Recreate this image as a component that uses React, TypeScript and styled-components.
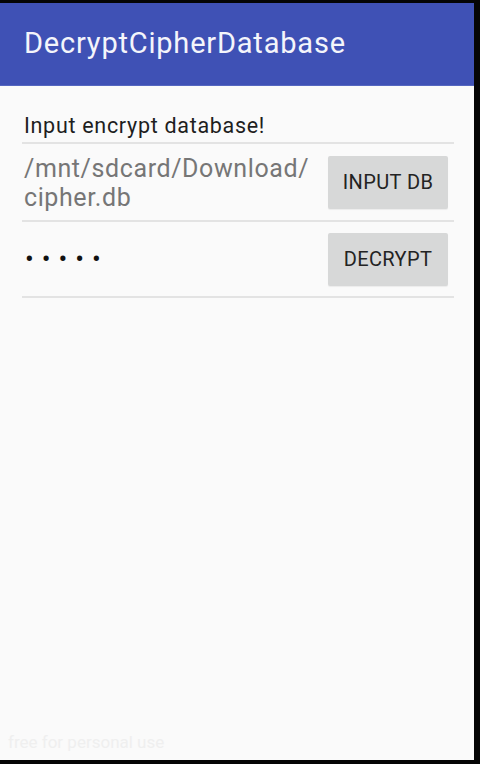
import React from 'react'
import styled, { createGlobalStyle } from 'styled-components'

const GlobalStyle = createGlobalStyle`
  html, body {
    margin: 0;
    padding: 0;
    background: #050505;
    font-family: Roboto, "Noto Sans", sans-serif;
  }
`

const Screen = styled.div`
  display: flex;
  flex-direction: column;
  width: 474px;
  height: 757px;
  margin-top: 3px;
  background: #fafafa;
  overflow: hidden;
`

const AppBar = styled.div`
  height: 82px;
  flex-shrink: 0;
  display: flex;
  align-items: center;
  padding-left: 24px;
  background: #3f51b5;
  border-bottom: 1px solid #5567c0;
`

const Title = styled.h1`
  margin: 0;
  padding-bottom: 2px;
  font-size: 29px;
  font-weight: 400;
  color: #f4f5fb;
  letter-spacing: 0.8px;
`

const Content = styled.div`
  flex: 1;
  display: flex;
  flex-direction: column;
  padding: 27px 20px 0 22px;
`

const Prompt = styled.div`
  padding: 0 0 4px 2px;
  font-size: 21.5px;
  letter-spacing: 0.7px;
  color: #1e1e1e;
  border-bottom: 2px solid #e3e3e3;
`

const Row = styled.div<{ $tall?: boolean }>`
  display: flex;
  align-items: center;
  justify-content: space-between;
  min-height: ${({ $tall }) => ($tall ? 76 : 74)}px;
  border-bottom: 2px solid #e3e3e3;
`

const PathText = styled.div`
  padding-left: 2px;
  font-size: 25px;
  letter-spacing: 0.6px;
  line-height: 29px;
  color: #767676;
  width: 300px;
  margin-top: 1px;
`

const Dots = styled.div`
  padding-left: 3px;
  font-size: 26px;
  letter-spacing: 8px;
  color: #111;
`

const Button = styled.button`
  width: 120px;
  height: 53px;
  margin-right: 6px;
  border: none;
  border-radius: 2px;
  background: #d7d8d8;
  box-shadow: 0 1px 1px rgba(0, 0, 0, 0.06);
  font-family: Roboto, "Noto Sans", sans-serif;
  font-size: 20px;
  letter-spacing: 0.4px;
  color: #232323;
  padding: 0;
`

const Spacer = styled.div`
  flex: 1;
`

const Watermark = styled.div`
  padding: 0 0 8px 8px;
  font-size: 17px;
  color: #efefef;
`

export default function App() {
  return (
    <>
      <GlobalStyle />
      <Screen>
        <AppBar>
          <Title>DecryptCipherDatabase</Title>
        </AppBar>
        <Content>
          <Prompt>Input encrypt database!</Prompt>
          <Row $tall>
            <PathText>/mnt/sdcard/Download/ cipher.db</PathText>
            <Button>INPUT DB</Button>
          </Row>
          <Row>
            <Dots>•••••</Dots>
            <Button>DECRYPT</Button>
          </Row>
        </Content>
        <Spacer />
        <Watermark>free for personal use</Watermark>
      </Screen>
    </>
  )
}
